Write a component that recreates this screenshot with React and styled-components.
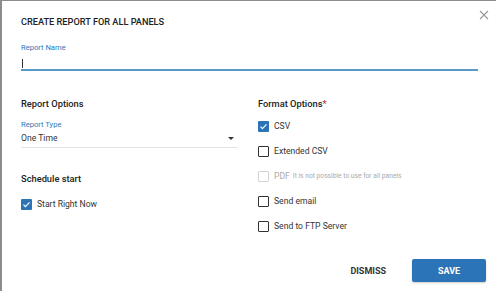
import styled, { createGlobalStyle } from "styled-components";

const GlobalStyle = createGlobalStyle`
  html, body {
    margin: 0;
    padding: 0;
    background: #8c8c8c;
    width: 496px;
    height: 291px;
    overflow: hidden;
  }
  body {
    font-family: Roboto, "Liberation Sans", sans-serif;
    color: #333;
  }
`;

const Modal = styled.div`
  margin: 1px 0 0 2px;
  height: 290px;
  background: #fff;
  display: flex;
  flex-direction: column;
  box-sizing: border-box;
`;

const Header = styled.div`
  display: flex;
  justify-content: space-between;
  align-items: flex-start;
  padding: 14px 6px 0 19px;
`;

const Title = styled.h1`
  margin: 0;
  font-size: 9.2px;
  line-height: 12px;
  font-weight: 500;
  color: #222;
  padding-top: 1px;
`;

const Close = styled.button`
  border: none;
  background: none;
  padding: 0;
  margin-top: -6px;
  width: 12px;
  height: 12px;
  display: flex;
  align-items: center;
  justify-content: center;
  cursor: pointer;
`;

const Body = styled.div`
  padding: 0 18px 0 19px;
  display: flex;
  flex-direction: column;
`;

const FieldLabel = styled.label`
  display: block;
  font-size: 7.6px;
  line-height: 10px;
  color: #2f78b7;
  margin-top: ${(p) => p.$top || 0}px;
`;

const NameInput = styled.div`
  height: 16px;
  border-bottom: 2px solid #5a9ac8;
  display: flex;
  align-items: center;
`;

const Caret = styled.span`
  display: inline-block;
  width: 1px;
  height: 9px;
  background: #333;
  margin-left: 1px;
  margin-top: 4px;
`;

const Columns = styled.div`
  display: grid;
  grid-template-columns: 217px 1fr;
  column-gap: 20px;
  margin-top: 27px;
`;

const Column = styled.div`
  display: flex;
  flex-direction: column;
`;

const SectionTitle = styled.h2`
  margin: ${(p) => p.$top || 0}px 0 0;
  font-size: 9.3px;
  line-height: 12px;
  font-weight: 500;
  color: #222;
`;

const Required = styled.span`
  color: #c0392b;
`;

const Select = styled.div`
  display: flex;
  justify-content: space-between;
  align-items: center;
  font-size: 8.6px;
  line-height: 12px;
  padding: 2px 4px 3px 0;
  border-bottom: 1px solid #e4e4e4;
`;

const Arrow = styled.span`
  width: 0;
  height: 0;
  border-left: 3px solid transparent;
  border-right: 3px solid transparent;
  border-top: 3px solid #333;
`;

const CheckList = styled.div`
  display: flex;
  flex-direction: column;
  gap: 13px;
  margin-top: ${(p) => p.$top || 0}px;
`;

const Row = styled.div`
  display: flex;
  align-items: center;
  gap: 5px;
  height: 12px;
  font-size: 8.6px;
  color: ${(p) => (p.$disabled ? "#aaa" : "#333")};
`;

const Box = styled.span`
  width: 11px;
  height: 11px;
  box-sizing: border-box;
  border-radius: 1px;
  display: flex;
  align-items: center;
  justify-content: center;
  background: ${(p) => (p.$checked ? "#2b74b8" : "#fff")};
  border: ${(p) =>
    p.$checked ? "none" : p.$disabled ? "1px solid #d4d4d4" : "1.5px solid #333"};
`;

const Hint = styled.span`
  font-size: 6.7px;
  color: #aaa;
  margin-left: -2px;
`;

const Footer = styled.div`
  margin-top: auto;
  display: flex;
  justify-content: flex-end;
  align-items: center;
  gap: 12px;
  padding: 0 10px 9px 0;
`;

const TextButton = styled.button`
  border: none;
  background: none;
  font-family: inherit;
  font-size: 9px;
  font-weight: 700;
  color: #333;
  padding: 6px 14px;
`;

const PrimaryButton = styled.button`
  border: none;
  border-radius: 2px;
  background: #2b74b8;
  color: #fff;
  font-family: inherit;
  font-size: 9px;
  font-weight: 700;
  width: 74px;
  height: 23px;
  box-shadow: 0 1px 2px rgba(0, 0, 0, 0.2);
`;

function Check({ checked, disabled }) {
  return (
    <Box $checked={checked} $disabled={disabled}>
      {checked && (
        <svg width="9" height="9" viewBox="0 0 24 24">
          <path d="M4 12.5l5 5L20 6.5" fill="none" stroke="#fff" strokeWidth="3.2" />
        </svg>
      )}
    </Box>
  );
}

function Option({ label, checked, disabled, hint }) {
  return (
    <Row $disabled={disabled}>
      <Check checked={checked} disabled={disabled} />
      <span>{label}</span>
      {hint && <Hint>{hint}</Hint>}
    </Row>
  );
}

export default function App() {
  return (
    <>
      <GlobalStyle />
      <Modal>
        <Header>
          <Title>CREATE REPORT FOR ALL PANELS</Title>
          <Close aria-label="close">
            <svg width="10" height="10" viewBox="0 0 10 10">
              <path d="M1 1l8 8M9 1l-8 8" stroke="#999" strokeWidth="1.1" />
            </svg>
          </Close>
        </Header>
        <Body>
          <FieldLabel $top={15}>Report Name</FieldLabel>
          <NameInput>
            <Caret />
          </NameInput>
          <Columns>
            <Column>
              <SectionTitle>Report Options</SectionTitle>
              <FieldLabel $top={10}>Report Type</FieldLabel>
              <Select>
                <span>One Time</span>
                <Arrow />
              </Select>
              <SectionTitle $top={25}>Schedule start</SectionTitle>
              <CheckList $top={13}>
                <Option label="Start Right Now" checked />
              </CheckList>
            </Column>
            <Column>
              <SectionTitle>
                Format Options<Required>*</Required>
              </SectionTitle>
              <CheckList $top={10}>
                <Option label="CSV" checked />
                <Option label="Extended CSV" />
                <Option label="PDF" disabled hint="It is not possible to use for all panels" />
                <Option label="Send email" />
                <Option label="Send to FTP Server" />
              </CheckList>
            </Column>
          </Columns>
        </Body>
        <Footer>
          <TextButton>DISMISS</TextButton>
          <PrimaryButton>SAVE</PrimaryButton>
        </Footer>
      </Modal>
    </>
  );
}
